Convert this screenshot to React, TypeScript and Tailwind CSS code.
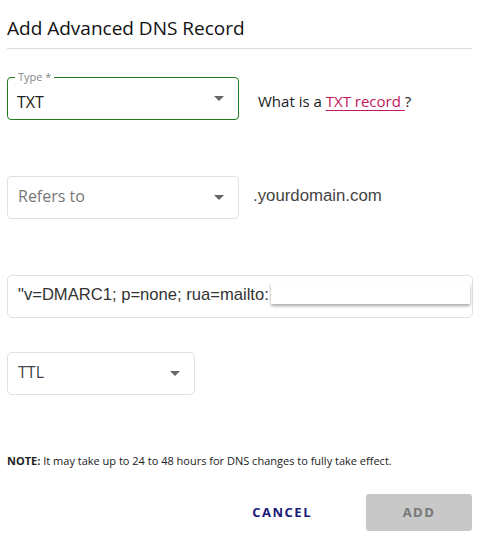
import React from "react";

const Caret = () => (
  <svg width="10" height="5" viewBox="0 0 10 5" className="shrink-0">
    <path d="M0 0 L10 0 L5 5 Z" fill="#666" />
  </svg>
);

export default function App() {
  return (
    <div className="w-[482px] h-[535px] bg-white px-[7px] relative" style={{ fontFamily: '"Open Sans", sans-serif' }}>
      <div className="pt-[15px] h-[49px] border-b border-[#dcdcdc] mr-[3px]">
        <h1 className="text-[19px] leading-[26px] text-[#111] pl-[0px]">Add Advanced DNS Record</h1>
      </div>

      <div className="flex items-center mt-[28px] h-[43px]">
        <div className="relative w-[232px] h-[43px] border-[1.5px] border-[#1e7b1e] rounded-[4px] flex items-center justify-between pl-[9px] pr-[14px]">
          <span className="absolute -top-[8px] left-[7px] bg-white px-[3px] text-[11px] leading-[14px] text-[#888]">Type *</span>
          <span className="text-[16px] text-[#222] mt-[6px]">TXT</span>
          <Caret />
        </div>
        <div className="ml-[19px] mt-[6px] text-[15px] text-[#1a1a1a]">
          What is a <span className="text-[#c2185b] underline underline-offset-[3px]">TXT record </span>?
        </div>
      </div>

      <div className="flex items-center mt-[56px] h-[43px]">
        <div className="w-[232px] h-[43px] border border-[#e0e0e0] rounded-[4px] flex items-center justify-between pl-[10px] pr-[14px]">
          <span className="text-[16px] text-[#777] -mt-[3px]">Refers to</span>
          <Caret />
        </div>
        <div className="ml-[14px] -mt-[4px] text-[16.8px] text-[#444]" style={{ fontFamily: '"Liberation Sans", Arial, sans-serif' }}>
          .yourdomain.com
        </div>
      </div>

      <div className="mt-[56px] w-[466px] h-[43px] border border-[#e0e0e0] rounded-[5px] flex items-center pl-[10px] relative">
        <span className="text-[16.6px] text-[#333] -mt-[2px]" style={{ fontFamily: '"Liberation Sans", Arial, sans-serif' }}>
          "v=DMARC1; p=none; rua=mailto:
        </span>
        <div className="absolute left-[263px] top-[7px] w-[199px] h-[21px] bg-white shadow-[0_2px_3px_rgba(0,0,0,0.35)]"></div>
      </div>

      <div className="mt-[34px] w-[188px] h-[43px] border border-[#e0e0e0] rounded-[5px] flex items-center justify-between pl-[10px] pr-[14px]">
        <span className="text-[16px] text-[#444] -mt-[3px]">TTL</span>
        <Caret />
      </div>

      <div className="mt-[58px] text-[11px] leading-[15px] text-[#222]">
        <span className="font-bold">NOTE:</span> It may take up to 24 to 48 hours for DNS changes to fully take effect.
      </div>

      <div className="flex items-center justify-end mt-[26px] mr-[3px]">
        <button className="text-[13px] font-bold tracking-[1.5px] text-[#1a1a7a] mr-[54px]">CANCEL</button>
        <button className="w-[106px] h-[37px] rounded-[3px] bg-[#c8c8c8] text-[13px] font-bold tracking-[1.5px] text-[#777]">ADD</button>
      </div>
    </div>
  );
}
